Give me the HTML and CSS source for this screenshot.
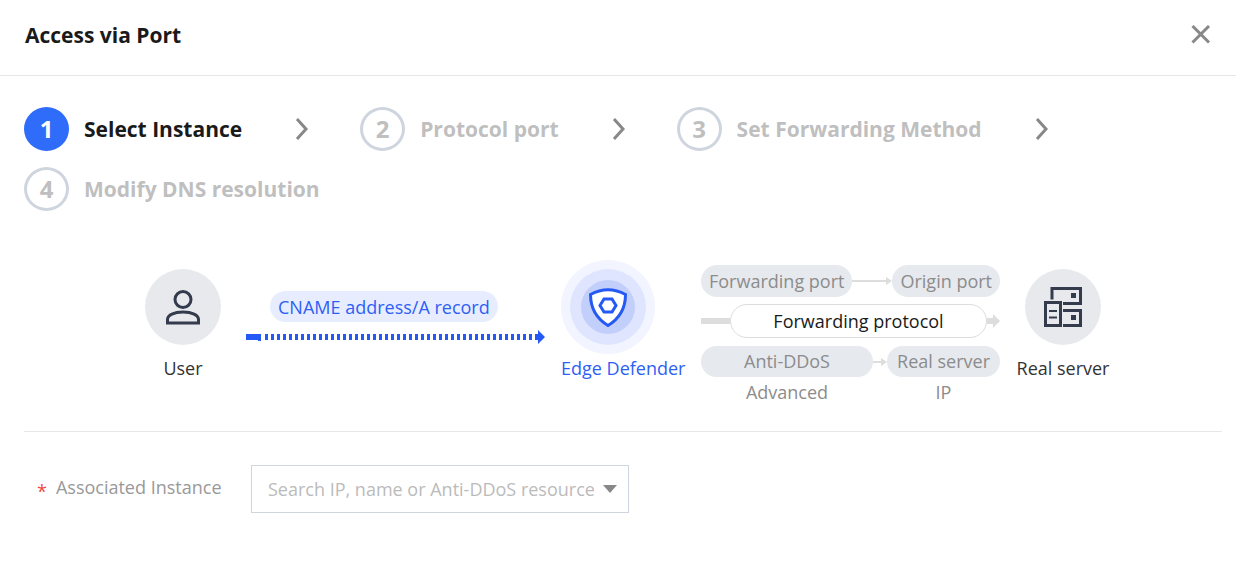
FILE: index.html
```html
<!DOCTYPE html>
<html lang="en">
<head>
  <meta charset="UTF-8">
  <meta name="viewport" content="width=device-width, initial-scale=1.0">
  <title>Access via Port</title>
  <link rel="stylesheet" href="styles.css">
</head>
<body>
  <header class="header">
    <h1>Access via Port</h1>
    <button type="button" class="close-btn" aria-label="Close">
      <svg width="20" height="20" viewBox="0 0 20 20"><path d="M1.500 1l16.500 16.500M18 1L1.500 17.500" fill="none" stroke="#888" stroke-width="3"/></svg>
    </button>
  </header>

  <main class="content">
    <ol class="steps">
      <li class="step active">
        <span class="num">1</span>
        <span class="step-name">Select Instance</span>
        <svg class="chevron" width="14" height="24" viewBox="0 0 14 24"><path d="M2 2l9 10-9 10" fill="none" stroke="#888" stroke-width="3"/></svg>
      </li>
      <li class="step">
        <span class="num">2</span>
        <span class="step-name">Protocol port</span>
        <svg class="chevron" width="14" height="24" viewBox="0 0 14 24"><path d="M2 2l9 10-9 10" fill="none" stroke="#888" stroke-width="3"/></svg>
      </li>
      <li class="step">
        <span class="num">3</span>
        <span class="step-name">Set Forwarding Method</span>
        <svg class="chevron" width="14" height="24" viewBox="0 0 14 24"><path d="M2 2l9 10-9 10" fill="none" stroke="#888" stroke-width="3"/></svg>
      </li>
      <li class="step">
        <span class="num">4</span>
        <span class="step-name">Modify DNS resolution</span>
      </li>
    </ol>

    <section class="flow">
      <div class="node">
        <div class="circle">
          <svg width="34" height="36" viewBox="0 0 34 36" fill="none" stroke="#343b4d" stroke-width="3">
            <circle cx="17" cy="10.500" r="8"/>
            <path d="M1.500 34v-3.500c0-4.500 6.500-7.500 15.500-7.500s15.500 3 15.500 7.500v3.500z"/>
          </svg>
        </div>
        <p>User</p>
      </div>

      <div class="link">
        <span class="record">CNAME address/A record</span>
        <svg width="299" height="14" viewBox="0 0 299 14">
          <path d="M0 4h15v7h-3v-1H0z" fill="#2459f5"/>
          <path d="M19 7h269" fill="none" stroke="#2459f5" stroke-width="6" stroke-dasharray="3 3"/>
          <path d="M289 4h3V0l7 7-7 7v-4h-3z" fill="#2459f5"/>
        </svg>
      </div>

      <div class="defender">
        <svg width="94" height="94" viewBox="0 0 94 94">
          <circle cx="47" cy="47" r="47" fill="#f2f5ff"/>
          <circle cx="47" cy="47" r="38" fill="#dfe5ff"/>
          <circle cx="47" cy="47" r="27" fill="#c3cffb"/>
          <path d="M29.500 34.500Q47 25 64.500 34.500C64.500 49 58.500 58.500 47 65.500C35.500 58.500 29.500 49 29.500 34.500z" fill="#fff" stroke="#2459f5" stroke-width="3"/>
          <path d="M43 39h8l4 6.500-4 6.500h-8l-4-6.500z" fill="none" stroke="#2459f5" stroke-width="3"/>
        </svg>
        <p>Edge Defender</p>
      </div>

      <div class="routes">
        <div class="route">
          <span class="pill">Forwarding port</span>
          <span class="thin-arrow"></span>
          <span class="pill">Origin port</span>
        </div>
        <div class="route protocol">
          <span class="bar"></span>
          <span class="pill-outline">Forwarding protocol</span>
          <span class="bar-end"></span>
        </div>
        <div class="route two-line">
          <span class="pill wide">Anti-DDoS<br>Advanced</span>
          <span class="thin-arrow"></span>
          <span class="pill">Real server<br>IP</span>
        </div>
      </div>

      <div class="node">
        <div class="circle">
          <svg width="38" height="40" viewBox="0 0 38 40" fill="none" stroke="#343b4d" stroke-width="3">
            <path d="M8 12.500V1.500h28.500v15H19"/>
            <path d="M19 23.500h17.500v15H19"/>
            <path d="M1.500 15.500h15v23h-15z"/>
            <path d="M5 24h8M5 30.500h8" stroke-width="2"/>
            <path d="M27 6h5v5h-5zM27 28h5v5h-5z" fill="#343b4d" stroke="none"/>
          </svg>
        </div>
        <p>Real server</p>
      </div>
    </section>

    <form class="form">
      <label for="instance"><span class="required">*</span>Associated Instance</label>
      <div class="select-box">
        <select id="instance">
          <option value="">Search IP, name or Anti-DDoS resource</option>
        </select>
        <svg class="caret" width="14" height="8" viewBox="0 0 14 8"><path d="M0 0h14L7 8z" fill="#888"/></svg>
      </div>
    </form>
  </main>
</body>
</html>
```
FILE: styles.css
```css
* {
  margin: 0;
  padding: 0;
  box-sizing: border-box;
}
body {
  font-family: 'Segoe UI', 'Open Sans', 'Noto Sans', sans-serif;
  font-size: 18px;
  line-height: 24px;
  color: #333;
  background-color: #fff;
}
.header {
  display: flex;
  justify-content: space-between;
  align-items: center;
  padding: 20px 25px 25px;
  border-bottom: 1px solid #e5e7e9;
}
.header h1 {
  font-size: 21px;
  line-height: 30px;
  font-weight: 700;
  color: #1a1a1a;
}
.close-btn {
  display: flex;
  background: none;
  border: none;
  cursor: pointer;
}
.content {
  padding: 31px 14px 24px 24px;
}

/* Steps */
.steps {
  display: flex;
  flex-wrap: wrap;
  gap: 16px 51px;
  list-style: none;
}
.step {
  display: flex;
  align-items: center;
  font-size: 21px;
  font-weight: 700;
  color: #bfbfbf;
}
.num {
  display: flex;
  align-items: center;
  justify-content: center;
  width: 45px;
  height: 44px;
  margin-right: 15px;
  border: 3px solid #cfd5de;
  border-radius: 50%;
  font-size: 24px;
}
.active {
  color: #1a1a1a;
}
.active .num {
  background-color: #2e6cf9;
  border-color: #2e6cf9;
  color: #fff;
}
.chevron {
  margin-left: 53px;
}

/* Traffic flow */
.flow {
  display: flex;
  justify-content: center;
  margin-top: 49px;
  padding-bottom: 23px;
  border-bottom: 1px solid #e5e7e9;
}
.node {
  display: flex;
  flex-direction: column;
  align-items: center;
  width: 76px;
  padding-top: 9px;
  white-space: nowrap;
}
.circle {
  display: flex;
  align-items: center;
  justify-content: center;
  width: 76px;
  height: 76px;
  margin-bottom: 11px;
  border-radius: 50%;
  background-color: #e7e9ed;
}
.link {
  display: flex;
  flex-direction: column;
  align-items: flex-start;
  gap: 8px;
  margin: 31px 16px 0 25px;
}
.record {
  height: 31px;
  margin-left: 24px;
  padding: 0 8px;
  border-radius: 16px;
  line-height: 32px;
  background-color: #e7edff;
  color: #2e5ff5;
}
.defender {
  width: 124px;
  margin-right: 16px;
  color: #2e5ff5;
  white-space: nowrap;
}
.defender svg {
  display: block;
  margin-bottom: 2px;
}
.routes {
  width: 299px;
  margin-right: 25px;
  padding-top: 5px;
  text-align: center;
  white-space: nowrap;
}
.route {
  display: flex;
  align-items: center;
}
.pill {
  height: 32px;
  padding: 0 8px;
  border-radius: 16px;
  line-height: 32px;
  background-color: #e6e9ee;
  color: #8c8c8c;
}
.two-line {
  padding-bottom: 31px;
}
/* second line hangs below the pill */
.two-line .pill {
  height: 31px;
  padding: 0 10px;
  line-height: 31px;
}
.wide {
  width: 172px;
}
.thin-arrow {
  display: flex;
  align-items: center;
  flex: 1;
}
.thin-arrow::before {
  content: '';
  flex: 1;
  height: 2px;
  background-color: #ddd;
}
.thin-arrow::after {
  content: '';
  border: solid transparent;
  border-width: 4px 0 4px 6px;
  border-left-color: #ddd;
}
.protocol {
  margin: 7px 0 8px;
}
.bar {
  width: 29px;
  height: 6px;
  background-color: #ddd;
}
.pill-outline {
  flex: 1;
  border: 1px solid #ddd;
  border-radius: 17px;
  line-height: 32px;
  color: #1a1a1a;
}
.bar-end {
  display: flex;
  align-items: center;
  width: 13px;
}
.bar-end::before {
  content: '';
  flex: 1;
  height: 6px;
  background-color: #ddd;
}
.bar-end::after {
  content: '';
  border: solid transparent;
  border-width: 7px 0 7px 7px;
  border-left-color: #ddd;
}

/* Form */
.form {
  display: flex;
  margin-top: 33px;
  padding-left: 13px;
}
.form label {
  width: 214px;
  line-height: 44px;
  color: #999;
}
.required {
  margin-right: 9px;
  line-height: 24px;
  vertical-align: -4px;
  color: #f0483e;
}
.select-box {
  position: relative;
  width: 378px;
}
.select-box select {
  width: 100%;
  height: 48px;
  padding: 0 34px 0 16px;
  border: 1px solid #cfd5de;
  border-radius: 0;
  appearance: none;
  background-color: #fff;
  font: inherit;
  color: #bbb;
}
.caret {
  position: absolute;
  top: 20px;
  right: 12px;
  pointer-events: none;
}
```
